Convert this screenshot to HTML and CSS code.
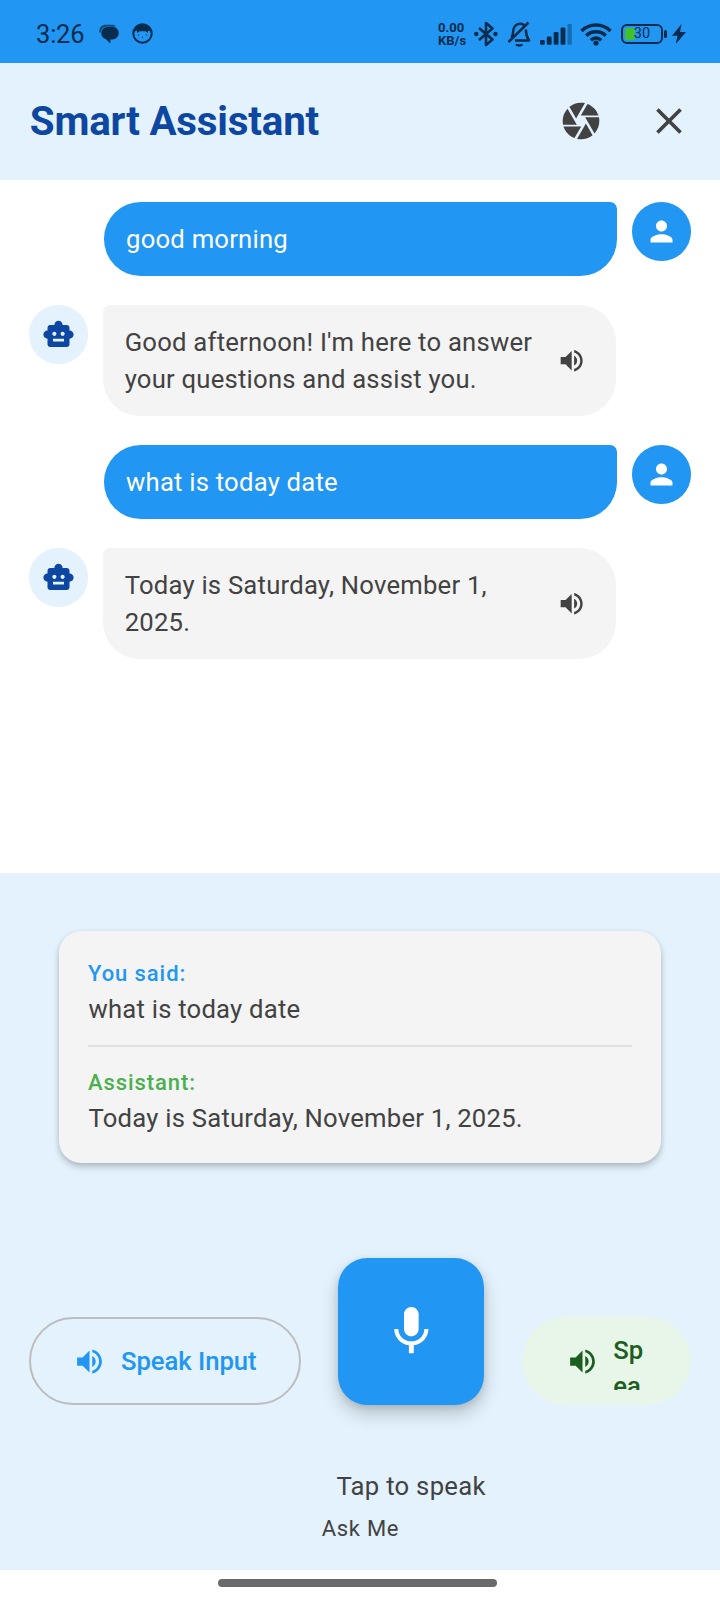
FILE: index.html
```html
<!DOCTYPE html>
<html lang="en">
<head>
<meta charset="utf-8">
<title>Smart Assistant</title>
<link rel="stylesheet" href="styles.css">
</head>
<body>
<svg class="defs" width="0" height="0" aria-hidden="true">
  <symbol id="volume" viewBox="0 0 24 24"><path d="M3 9v6h4l5 5V4L7 9H3zm13.500 3c0-1.770-1.020-3.290-2.500-4.030v8.050c1.480-.73 2.500-2.250 2.500-4.020zM14 3.230v2.060c2.890.86 5 3.540 5 6.710s-2.110 5.850-5 6.710v2.060c4.010-.91 7-4.490 7-8.770s-2.990-7.860-7-8.770z"/></symbol>
  <symbol id="robot" viewBox="0 0 24 24"><path d="M20 9V7c0-1.100-.9-2-2-2h-3c0-1.660-1.340-3-3-3S9 3.340 9 5H6c-1.100 0-2 .9-2 2v2c-1.660 0-3 1.340-3 3s1.340 3 3 3v4c0 1.100.9 2 2 2h12c1.100 0 2-.9 2-2v-4c1.660 0 3-1.340 3-3s-1.340-3-3-3zM7.500 11.500c0-.83.67-1.500 1.500-1.500s1.500.67 1.500 1.500S9.830 13 9 13s-1.500-.67-1.500-1.500zM16 17H8v-2h8v2zm-1-4c-.83 0-1.500-.67-1.500-1.500S14.170 10 15 10s1.500.67 1.500 1.500S15.830 13 15 13z"/></symbol>
  <symbol id="person" viewBox="0 0 24 24"><path d="M12 12c2.210 0 4-1.790 4-4s-1.790-4-4-4-4 1.790-4 4 1.790 4 4 4zm0 2c-2.670 0-8 1.340-8 4v2h16v-2c0-2.660-5.330-4-8-4z"/></symbol>
</svg>

<div class="screen">
  <div class="status">
    <span class="clock">3:26</span>
    <svg class="st-chat" width="20" height="20" viewBox="0 0 20 20"><path d="M0.300 8C0 3 3 .8 7 .8h6c2 0 3.300 .6 4 1.600H9C4.500 2.400 2 4.500 2 8.500 1 8.700.4 8.500.3 8z" opacity=".75"/><path d="M9.500 2.800h3.500c4 0 6.700 2.600 6.700 6.200s-2.700 6.400-6.500 6.400h-1.800V19.600L7 15.200C4 14.400 2.300 12 2.300 9.300 2.300 5.500 5.500 2.800 9.500 2.800z"/></svg>
    <svg class="st-face" width="21" height="21" viewBox="0 0 21 21"><circle cx="10.500" cy="10.500" r="9.200" fill="none" stroke="currentColor" stroke-width="2"/><path d="M2.500 8.500C3.500 2.500 7 1 10.500 1s7 1.500 8 7.500l-2.300-1-.4 2.500-2.300-1.800h-6L5.200 10l-.4-2.500z"/><circle cx="6.500" cy="12" r=".8" opacity=".7"/><circle cx="14.500" cy="12" r=".8" opacity=".7"/><circle cx="10.500" cy="14.500" r=".8" opacity=".7"/></svg>
    <div class="rate"><span>0.00</span><span>KB/s</span></div>
    <svg class="st-bt" width="24" height="26" viewBox="0 0 24 26" fill="none" stroke="currentColor" stroke-width="2.600" stroke-linejoin="round"><path d="M5 7l13.500 11.500-6.500 5.500V2l6.500 5.500L5 19"/><circle cx="2.300" cy="13" r="1.100" stroke-width="2.200"/><circle cx="21.500" cy="13" r="1.100" stroke-width="2.200"/></svg>
    <svg class="st-bell" width="25" height="26" viewBox="0 0 25 26" fill="none" stroke="currentColor" stroke-width="2.500" stroke-linejoin="round"><path d="M4.500 16.500c1.200-2 1.700-3.500 1.700-6C6.200 6 9 2.800 13 2.800c1.500 0 3 .4 4 1.200M18.800 8.500c.2 5 .8 7.500 3.200 11H8M1.500 21L21.500 1.500"/><path d="M9 23.500c1.500 1.300 5 1.300 6.500 0" stroke-width="2.300"/></svg>
    <svg class="st-signal" width="33" height="22" viewBox="0 0 33 22"><rect x="0" y="17" width="4.800" height="4.700" rx="1.300"/><rect x="6.800" y="13.500" width="4.800" height="8.200" rx="1.300"/><rect x="13.700" y="9" width="4.800" height="12.700" rx="1.300"/><rect x="20.600" y="4.500" width="4.800" height="17.200" rx="1.300"/><rect x="27.500" y="1" width="4.300" height="20.700" rx="1.300" opacity=".4"/></svg>
    <svg class="st-wifi" width="32" height="24" viewBox="0 0 32 24" fill="none" stroke="currentColor" stroke-width="3.500"><path d="M1.500 9C9.500 1 22.500 1 30.500 9M6.200 13.700c5.300-5.300 14.300-5.300 19.600 0M10.800 18.200c3-3 7.400-3 10.400 0"/><circle cx="16" cy="21" r="2.600" fill="currentColor" stroke="none"/></svg>
    <div class="battery"><span class="level"></span><span class="pct">30</span></div>
    <svg class="st-nub" width="4" height="8" viewBox="0 0 4 8"><rect width="3" height="8" rx="1.500"/></svg>
    <svg class="st-bolt" width="14" height="20" viewBox="0 0 14 20"><path d="M9.500 0L0 11.800h5.500L3.800 20 14 8H8z"/></svg>
  </div>

  <header class="header">
    <h1 class="title">Smart Assistant</h1>
    <svg class="icon44" viewBox="0 0 24 24"><path d="M9.400 10.500l4.770-8.260C13.470 2.090 12.750 2 12 2c-2.400 0-4.600.85-6.320 2.250l3.660 6.350.06-.1zM21.540 9c-.92-2.920-3.150-5.260-6-6.340L11.880 9h9.660zm.26 1h-7.490l.29.500 4.760 8.250C21 16.970 22 14.610 22 12c0-.69-.07-1.350-.2-2zM8.540 12l-3.900-6.750C3.010 7.030 2 9.390 2 12c0 .69.07 1.350.2 2h7.490l-1.150-2zm-6.080 3c.92 2.920 3.150 5.260 6 6.340L12.120 15H2.460zm11.270 0l-3.900 6.760c.7.150 1.420.24 2.170.24 2.400 0 4.600-.85 6.320-2.250l-3.660-6.350-.93 1.600z"/></svg>
    <svg class="icon44" viewBox="0 0 24 24"><path d="M19 6.410L17.590 5 12 10.590 6.410 5 5 6.410 10.590 12 5 17.590 6.410 19 12 13.410 17.590 19 19 17.590 13.410 12z"/></svg>
  </header>

  <main class="chat">
    <div class="row user"><p class="bubble">good morning</p><div class="avatar"><svg viewBox="0 0 24 24"><use href="#person"/></svg></div></div>
    <div class="row bot"><div class="avatar"><svg viewBox="0 0 24 24"><use href="#robot"/></svg></div><div class="bubble"><p class="said">Good afternoon! I'm here to answer your questions and assist you.</p><svg class="replay" viewBox="0 0 24 24"><use href="#volume"/></svg></div></div>
    <div class="row user"><p class="bubble">what is today date</p><div class="avatar"><svg viewBox="0 0 24 24"><use href="#person"/></svg></div></div>
    <div class="row bot"><div class="avatar"><svg viewBox="0 0 24 24"><use href="#robot"/></svg></div><div class="bubble"><p class="said">Today is Saturday, November 1, 2025.</p><svg class="replay" viewBox="0 0 24 24"><use href="#volume"/></svg></div></div>
  </main>

  <section class="panel">
    <div class="card">
      <div class="label you">You said:</div>
      <p class="line">what is today date</p>
      <hr class="divider">
      <div class="label assistant">Assistant:</div>
      <p class="line">Today is Saturday, November 1, 2025.</p>
    </div>
    <div class="controls">
      <button class="pill outlined"><svg viewBox="0 0 24 24"><use href="#volume"/></svg><span>Speak Input</span></button>
      <div class="mic-col">
        <button class="mic" aria-label="Microphone"><svg viewBox="0 0 24 24"><path d="M12 14c1.660 0 2.990-1.340 2.990-3L15 5c0-1.660-1.340-3-3-3S9 3.340 9 5v6c0 1.660 1.340 3 3 3zm5.300-3c0 3-2.540 5.100-5.300 5.100S6.700 14 6.700 11H5c0 3.410 2.720 6.230 6 6.720V21h2v-3.280c3.280-.48 6-3.300 6-6.720h-1.700z"/></svg></button>
        <p class="tap">Tap to speak</p>
      </div>
      <button class="pill tonal"><svg viewBox="0 0 24 24"><use href="#volume"/></svg><span>Speak</span></button>
    </div>
    <p class="ask">Ask Me</p>
  </section>
  <div class="nav"><span class="handle"></span></div>
</div>
</body>
</html>
```
FILE: styles.css
```css
* { box-sizing: border-box; margin: 0; padding: 0; }
body { font-family: Roboto, sans-serif; background: #fff; color: #424242; }
svg { display: block; flex: none; fill: currentColor; }
svg[fill="none"] { fill: none; }
.defs { position: absolute; }
button { border: 0; background: none; font: inherit; color: inherit; }
.screen { width: 720px; height: 1600px; display: flex; flex-direction: column; overflow: hidden; }

.status { height: 63px; flex: none; background: #2196f3; color: #072c4d; display: flex; align-items: center; padding: 4px 34px 0 36px; }
.clock { font-size: 25.500px; letter-spacing: -.2px; width: 63px; line-height: 30px; padding-top: 1px; }
.st-chat { margin-right: 13px; }
.rate { margin-left: 285px; margin-top: 2px; width: 36px; display: flex; flex-direction: column; font-size: 13px; font-weight: 700; line-height: 12.500px; }
.st-bell { margin-left: 9px; }
.st-signal { margin-left: 8px; margin-top: 1px; }
.st-wifi { margin-left: 7px; }
.battery { position: relative; margin-left: 9px; width: 42px; height: 20px; border: 2px solid currentColor; border-radius: 6px; display: flex; align-items: center; justify-content: center; flex: none; }
.level { position: absolute; left: 2px; top: 2px; width: 10px; height: 12px; border-radius: 2px; background: #43c02c; }
.pct { position: relative; font-size: 14.500px; line-height: 16px; }
.st-nub { margin-left: 1px; }
.st-bolt { margin-left: 4px; }

.header { height: 117px; flex: none; background: #e3f2fd; display: flex; align-items: center; padding: 0 29.330px; }
.title { flex: 1; font-size: 40.330px; font-weight: 700; color: #0d47a1; line-height: 52px; letter-spacing: -.2px; padding-left: .5px; }
.icon44 { width: 44px; height: 44px; margin-top: -1px; }
.icon44 + .icon44 { margin-left: 44px; }

.chat { flex: 1; padding: 22px 29.330px; display: flex; flex-direction: column; gap: 29.330px; }
.row { display: flex; align-items: flex-start; gap: 14.670px; }
.user { justify-content: flex-end; }
.avatar { width: 58.670px; height: 58.670px; border-radius: 50%; display: flex; align-items: center; justify-content: center; flex: none; }
.avatar svg { width: 33px; height: 33px; }
.user .avatar { background: #2196f3; color: #fff; }
.bot .avatar { background: #e3f2fd; color: #0d47a1; }
.bubble { width: 513.330px; padding: 19.200px 22px 18px; font-size: 25.670px; line-height: 36.670px; letter-spacing: .22px; }
.user .bubble { background: #2196f3; color: #fff; border-radius: 36.670px 7px 36.670px 36.670px; }
.bot .bubble { background: #f4f4f4; border-radius: 7px 36.670px 36.670px 36.670px; display: flex; align-items: center; }
.said { flex: 1; }
.replay { width: 29.330px; height: 29.330px; margin: 0 7.300px 0 14.670px; }

.panel { height: 697px; flex: none; background: #e3f2fd; padding: 58px 29.330px 0; display: flex; flex-direction: column; }
.card { margin: 0 29.330px; padding: 27.700px 29.330px 0; height: 231.500px; flex: none; border-radius: 22px; background: #f4f4f4; box-shadow: 0 4px 7px rgba(0,0,0,.2), 0 1px 4px rgba(0,0,0,.08); }
.label { font-size: 22px; line-height: 29.330px; font-weight: 500; letter-spacing: .92px; margin-bottom: 2.700px; }
.you { color: #2196f3; }
.assistant { color: #4caf50; }
.line { font-size: 25.670px; line-height: 36.670px; letter-spacing: .22px; padding-left: .5px; }
.divider { border: 0; height: 2px; background: #e0e0e0; margin: 18px 0 21px; }

.controls { margin-top: 95.500px; display: flex; justify-content: space-between; align-items: flex-start; }
.pill { height: 88px; border-radius: 44px; margin-top: 59px; display: flex; align-items: center; padding: 0 44px; font-size: 25.670px; line-height: 36.670px; font-weight: 500; letter-spacing: -.05px; white-space: nowrap; }
.pill svg { width: 33px; height: 33px; margin-right: 14.670px; }
.outlined { border: 2px solid #bdbdbd; color: #2196f3; padding: 0 42px; }
.outlined span { padding-top: 1px; }
.tonal { width: 169px; background: #e8f5e9; color: #1b5e20; }
.tonal span { flex: 1; height: 58.670px; overflow: hidden; white-space: normal; word-break: break-all; text-align: left; }
.mic { width: 146.670px; height: 146.670px; border-radius: 29.330px; background: #2196f3; color: #fff; display: flex; align-items: center; justify-content: center; box-shadow: 0 9px 18px rgba(0,0,0,.2), 0 2px 7px rgba(0,0,0,.1); }
.mic svg { width: 58.670px; height: 58.670px; }
.mic-col { width: 146.670px; display: flex; flex-direction: column; align-items: center; }
.tap { margin-top: 63px; font-size: 25.670px; line-height: 36.670px; letter-spacing: .28px; white-space: nowrap; }
.ask { margin-top: 9.500px; padding-left: 1px; text-align: center; font-size: 22px; line-height: 29.330px; letter-spacing: .73px; }

.nav { height: 30px; flex: none; display: flex; justify-content: center; padding-top: 9px; }
.handle { width: 279px; height: 8px; border-radius: 4px; background: #6a6a6a; margin-right: 5px; }
```
